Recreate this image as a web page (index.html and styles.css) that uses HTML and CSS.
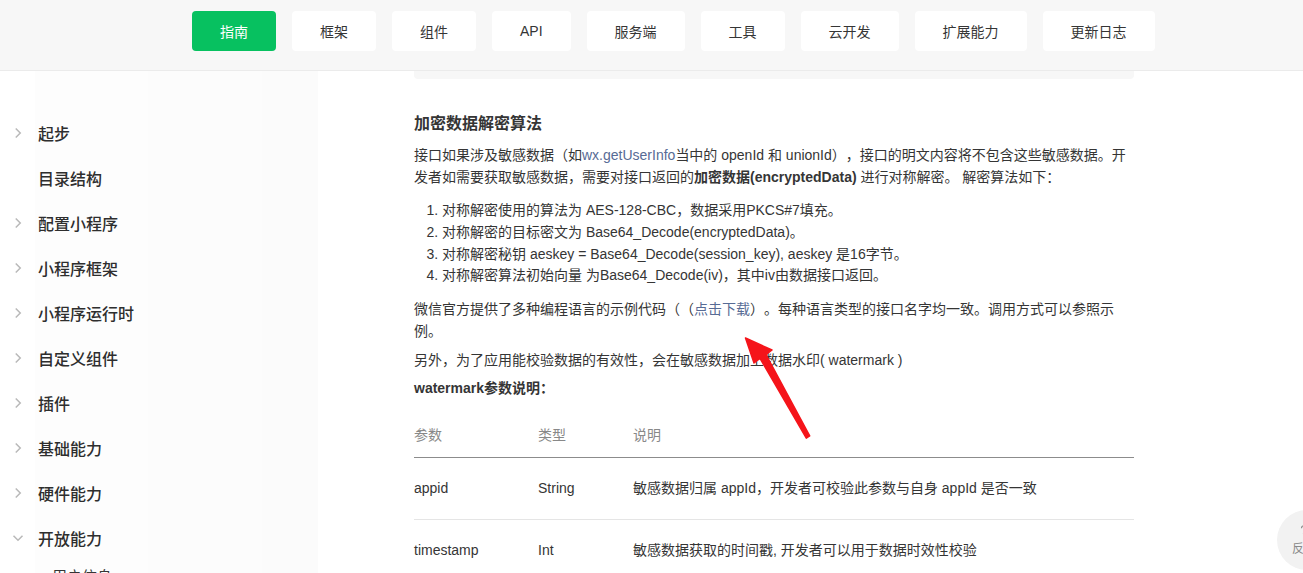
FILE: index.html
```html
<!DOCTYPE html>
<html lang="zh-CN">
<head>
    <meta charset="UTF-8">
    <meta name="viewport" content="width=device-width, initial-scale=1.0">
    <title>开放数据校验与解密 | 微信开放文档</title>
    <link rel="stylesheet" href="styles.css">
</head>
<body>
    <header class="header">
        <nav class="nav">
            <a class="nav-item active" href="#">指南</a>
            <a class="nav-item" href="#">框架</a>
            <a class="nav-item" href="#">组件</a>
            <a class="nav-item" href="#">API</a>
            <a class="nav-item" href="#">服务端</a>
            <a class="nav-item" href="#">工具</a>
            <a class="nav-item" href="#">云开发</a>
            <a class="nav-item" href="#">扩展能力</a>
            <a class="nav-item" href="#">更新日志</a>
        </nav>
    </header>

    <div class="main">
        <aside class="sidebar">
            <ul class="menu">
                <li class="menu-item"><span class="arrow"><svg viewBox="0 0 8 8"><path d="M2.5 1 L5.5 4 L2.5 7"/></svg></span>起步</li>
                <li class="menu-item"><span class="arrow"></span>目录结构</li>
                <li class="menu-item"><span class="arrow"><svg viewBox="0 0 8 8"><path d="M2.5 1 L5.5 4 L2.5 7"/></svg></span>配置小程序</li>
                <li class="menu-item"><span class="arrow"><svg viewBox="0 0 8 8"><path d="M2.5 1 L5.5 4 L2.5 7"/></svg></span>小程序框架</li>
                <li class="menu-item"><span class="arrow"><svg viewBox="0 0 8 8"><path d="M2.5 1 L5.5 4 L2.5 7"/></svg></span>小程序运行时</li>
                <li class="menu-item"><span class="arrow"><svg viewBox="0 0 8 8"><path d="M2.5 1 L5.5 4 L2.5 7"/></svg></span>自定义组件</li>
                <li class="menu-item"><span class="arrow"><svg viewBox="0 0 8 8"><path d="M2.5 1 L5.5 4 L2.5 7"/></svg></span>插件</li>
                <li class="menu-item"><span class="arrow"><svg viewBox="0 0 8 8"><path d="M2.5 1 L5.5 4 L2.5 7"/></svg></span>基础能力</li>
                <li class="menu-item"><span class="arrow"><svg viewBox="0 0 8 8"><path d="M2.5 1 L5.5 4 L2.5 7"/></svg></span>硬件能力</li>
                <li class="menu-item"><span class="arrow"><svg viewBox="0 0 8 8"><path d="M1 2.5 L4 5.5 L7 2.5"/></svg></span>开放能力</li>
                <li class="menu-sub">用户信息</li>
                <li class="menu-sub">开放数据校验与解密</li>
                <li class="menu-sub">获取手机号</li>
                <li class="menu-sub">获取头像昵称</li>
                <li class="menu-sub">订阅消息</li>
                <li class="menu-sub">客服消息</li>
                <li class="menu-sub">小程序码</li>
                <li class="menu-sub">卡券</li>
                <li class="menu-sub">转发</li>
                <li class="menu-sub">收货地址</li>
                <li class="menu-sub">生物认证</li>
                <li class="menu-sub">微信支付</li>
                <li class="menu-sub">附近的小程序</li>
                <li class="menu-sub">地理位置接口</li>
                <li class="menu-sub">发票</li>
                <li class="menu-sub">图片识别</li>
                <li class="menu-sub">视频号</li>
                <li class="menu-sub">打开 App</li>
                <li class="menu-sub">一次性订阅</li>
                <li class="menu-sub">小程序隐私协议</li>
                <li class="menu-sub">同声传译</li>
                <li class="menu-item"><span class="arrow"><svg viewBox="0 0 8 8"><path d="M2.5 1 L5.5 4 L2.5 7"/></svg></span>数据分析</li>
                <li class="menu-item"><span class="arrow"><svg viewBox="0 0 8 8"><path d="M2.5 1 L5.5 4 L2.5 7"/></svg></span>性能优化</li>
                <li class="menu-item"><span class="arrow"><svg viewBox="0 0 8 8"><path d="M2.5 1 L5.5 4 L2.5 7"/></svg></span>安全指引</li>
                <li class="menu-item"><span class="arrow"><svg viewBox="0 0 8 8"><path d="M2.5 1 L5.5 4 L2.5 7"/></svg></span>调试</li>
                <li class="menu-item"><span class="arrow"><svg viewBox="0 0 8 8"><path d="M2.5 1 L5.5 4 L2.5 7"/></svg></span>小程序测试</li>
                <li class="menu-item"><span class="arrow"><svg viewBox="0 0 8 8"><path d="M2.5 1 L5.5 4 L2.5 7"/></svg></span>运维中心</li>
                <li class="menu-item"><span class="arrow"></span>自定义 tabBar</li>
                <li class="menu-item"><span class="arrow"><svg viewBox="0 0 8 8"><path d="M2.5 1 L5.5 4 L2.5 7"/></svg></span>多端开发</li>
            </ul>
        </aside>

        <div class="content">
            <article class="article">
                <div class="code-end"></div>

                <h3 class="title">加密数据解密算法</h3>
                <p>接口如果涉及敏感数据（如<a href="#">wx.getUserInfo</a>当中的 openId 和 unionId），接口的明文内容将不包含这些敏感数据。开发者如需要获取敏感数据，需要对接口返回的<strong>加密数据(encryptedData)</strong> 进行对称解密。 解密算法如下：</p>
                <ol>
                    <li>对称解密使用的算法为 AES-128-CBC，数据采用PKCS#7填充。</li>
                    <li>对称解密的目标密文为 Base64_Decode(encryptedData)。</li>
                    <li>对称解密秘钥 aeskey = Base64_Decode(session_key), aeskey 是16字节。</li>
                    <li>对称解密算法初始向量 为Base64_Decode(iv)，其中iv由数据接口返回。</li>
                </ol>
                <p>微信官方提供了多种编程语言的示例代码（（<a href="#">点击下载</a>）。每种语言类型的接口名字均一致。调用方式可以参照示例。</p>
                <p>另外，为了应用能校验数据的有效性，会在敏感数据加上数据水印( watermark )</p>
                <p><strong>watermark参数说明：</strong></p>

                <table class="params">
                    <thead>
                        <tr><th class="col-name">参数</th><th class="col-type">类型</th><th>说明</th></tr>
                    </thead>
                    <tbody>
                        <tr><td>appid</td><td>String</td><td>敏感数据归属 appId，开发者可校验此参数与自身 appId 是否一致</td></tr>
                        <tr><td>timestamp</td><td>Int</td><td>敏感数据获取的时间戳, 开发者可以用于数据时效性校验</td></tr>
                    </tbody>
                </table>
            </article>
        </div>
    </div>

    <!-- 标注箭头 -->
    <svg class="mark" viewBox="740 333 75 110" width="75" height="110">
        <polygon points="745.5,338 772,350 766,354.6 809.7,435.9 806.3,438.1 760,358.4 754,363" />
    </svg>

    <a class="feedback" href="#">
        <svg viewBox="0 0 12 12" width="12" height="12"><path d="M3.5 4.2 C3.5 2.6 4.6 1.8 6 1.8 C7.4 1.8 8.5 2.6 8.5 3.9 C8.5 5.4 6 5.6 6 7.4"/><circle cx="6" cy="9.6" r="0.6"/></svg>
        <span>反馈</span>
    </a>
</body>
</html>
```

FILE: styles.css
```css
html, body {
    margin: 0;
    height: 100%;
}
body {
    font-family: "Liberation Sans", "Noto Sans CJK SC", sans-serif;
    color: #353535;
    background: #fff;
    overflow: hidden;
    position: relative;
    text-spacing-trim: space-all;
}
a {
    text-decoration: none;
}

.header {
    height: 70px;
    background: #f7f7f7;
    border-bottom: 1px solid #ebebeb;
    box-sizing: content-box;
}
.nav {
    display: flex;
    gap: 16px;
    padding: 11px 0 0 192px;
}
.nav-item {
    display: flex;
    align-items: center;
    height: 40px;
    padding: 0 28px;
    background: #fff;
    border-radius: 4px;
    font-size: 14px;
    color: #353535;
}
.nav-item.active {
    background: #07c160;
    color: #fff;
}

.main {
    display: flex;
    height: calc(100% - 71px);
}

.sidebar {
    width: 318px;
    flex-shrink: 0;
    overflow-y: auto;
    background: linear-gradient(to right, #fff 35px, #fdfdfd 35px, #fdfdfd 148px, #fcfcfc 148px, #fcfcfc 262px, #fbfbfb 262px);
}
.sidebar::-webkit-scrollbar {
    width: 6px;
}
.sidebar::-webkit-scrollbar-thumb {
    background: #c1c1c1;
}
.sidebar::-webkit-scrollbar-track {
    background: #fbfbfb;
}
.menu {
    list-style: none;
    margin: 0;
    padding: 39px 0 360px;
}
.menu-item {
    display: flex;
    align-items: center;
    height: 45px;
    padding-left: 12px;
    font-size: 16px;
    font-weight: 500;
    color: #2e2e2e;
}
.arrow {
    width: 12px;
    height: 12px;
    margin-right: 14px;
    display: flex;
}
.arrow svg {
    width: 12px;
    height: 12px;
    fill: none;
    stroke: #b9b9b9;
    stroke-width: 1;
}
.menu-sub {
    display: flex;
    align-items: center;
    height: 30px;
    padding-left: 52px;
    font-size: 15px;
    color: #353535;
}

.content {
    flex: 1;
    overflow: hidden;
}
.article {
    width: 720px;
    margin-left: 96px;
    font-size: 14px;
    line-height: 1.55;
}
.code-end {
    height: 8px;
    background: #f7f7f7;
    border-radius: 0 0 4px 4px;
}
.title {
    margin: 33px 0 9px;
    font-size: 16px;
    line-height: 24px;
    font-weight: 600;
}
.article p {
    margin: 0 0 7px;
}
.article a {
    color: #576b95;
}
.article strong {
    font-weight: 600;
}
.article ol {
    margin: 12px 0;
    padding-left: 28px;
}
.article ol + p {
    margin-top: 12px;
}

.params {
    width: 100%;
    border-collapse: collapse;
    margin-top: 15px;
}
.params th {
    text-align: left;
    font-weight: normal;
    color: #888;
    padding: 10px 0;
    border-bottom: 1px solid #8c8c8c;
}
.params td {
    padding: 20px 0;
    border-bottom: 1px solid #e5e5e5;
}
.col-name {
    width: 124px;
}
.col-type {
    width: 95px;
}

.mark {
    position: absolute;
    left: 740px;
    top: 333px;
    pointer-events: none;
}
.mark polygon {
    fill: #f5141a;
    stroke: #f5141a;
    stroke-width: 1.5;
    stroke-linejoin: round;
}

.feedback {
    position: fixed;
    left: 1277px;
    top: 510px;
    width: 60px;
    height: 60px;
    border-radius: 50%;
    background: #f2f2f2;
    color: #8a8a8a;
    font-size: 12px;
    display: flex;
    flex-direction: column;
    align-items: center;
    justify-content: center;
    gap: 3px;
    padding-right: 6px;
    box-sizing: border-box;
}
.feedback svg {
    fill: none;
    stroke: #8a8a8a;
    stroke-width: 1.1;
}
.feedback circle {
    fill: #8a8a8a;
}
```
